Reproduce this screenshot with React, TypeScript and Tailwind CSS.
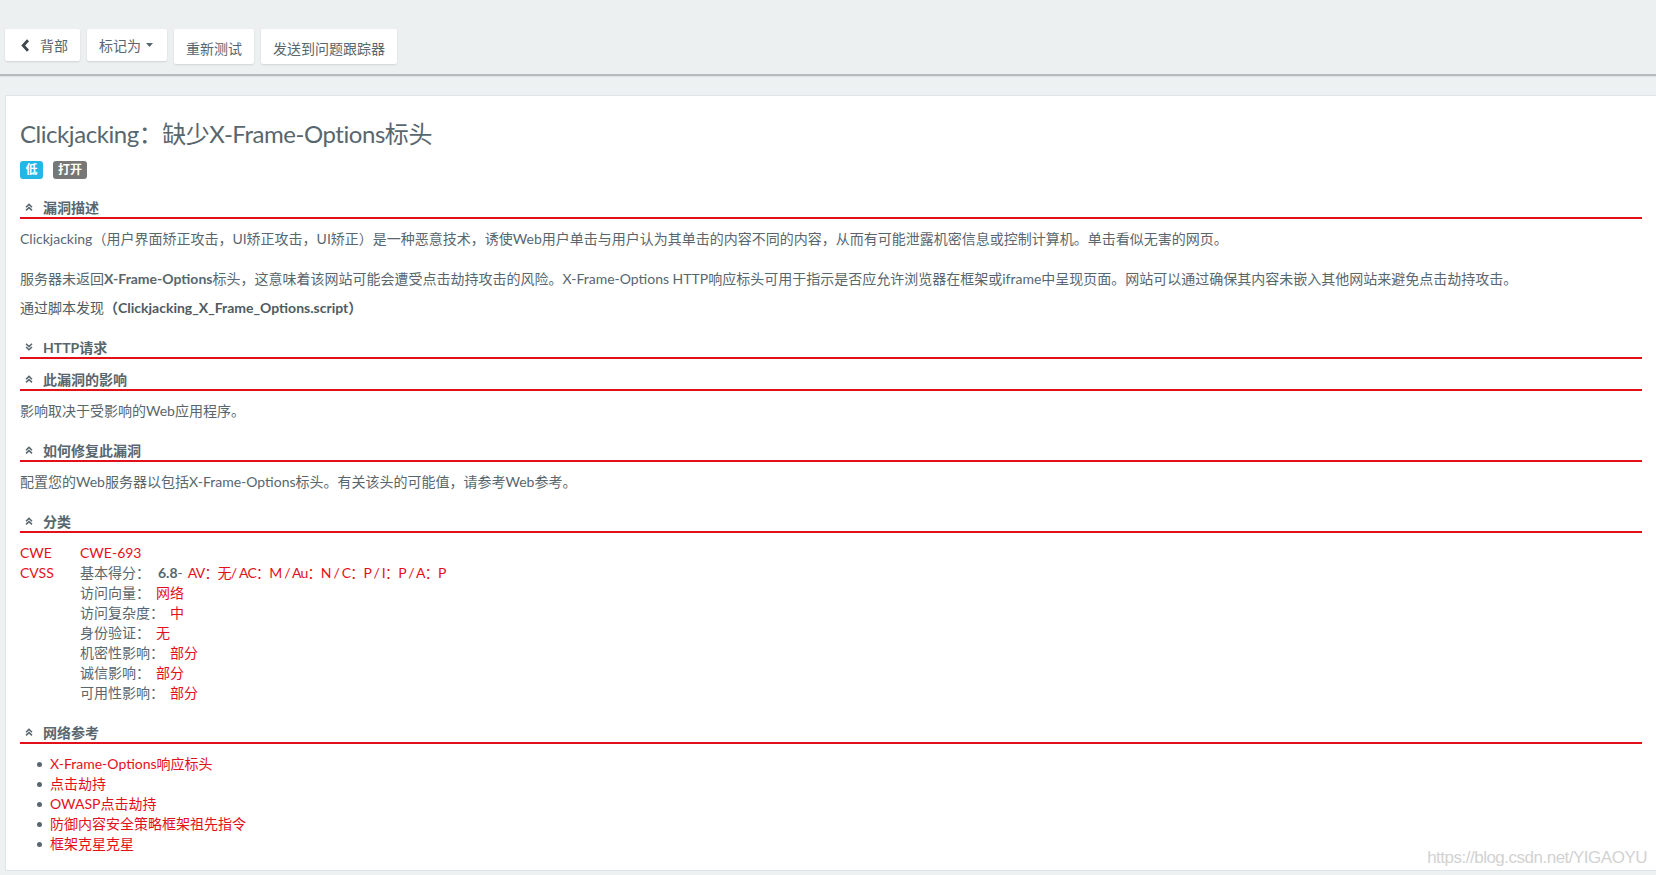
import React from "react";

const FONT = { fontFamily: 'Lato, "Noto Sans CJK SC", sans-serif' };

function ChevronsUp() {
  return (
    <svg width="8" height="8" viewBox="0 0 8 8" fill="none" stroke="#58666e" strokeWidth="1.5">
      <path d="M1 4.2 L4 1.4 L7 4.2" />
      <path d="M1 7.4 L4 4.6 L7 7.4" />
    </svg>
  );
}

function ChevronsDown() {
  return (
    <svg width="8" height="8" viewBox="0 0 8 8" fill="none" stroke="#58666e" strokeWidth="1.5">
      <path d="M1 0.8 L4 3.6 L7 0.8" />
      <path d="M1 4 L4 6.8 L7 4" />
    </svg>
  );
}

function SectionHead({ title, open = true }: { title: string; open?: boolean }) {
  return (
    <div className="mt-[11px] flex items-center gap-[10px] pl-[5px] border-b-2 border-[#e3101a] h-[21px] pb-[1px]">
      {open ? <ChevronsUp /> : <ChevronsDown />}
      <span className="text-[14px] leading-[19px] font-bold text-[#58666e]">{title}</span>
    </div>
  );
}

function Body({ children }: { children: React.ReactNode }) {
  return <div className="pt-[10px] pb-[9px] text-[14px] leading-[20px] text-[#58666e]">{children}</div>;
}

// ─── Toolbar buttons ────────────────────────────────────────────────────────
function ToolButton({ children, tall = false }: { children: React.ReactNode; tall?: boolean }) {
  return (
    <button
      className={
        tall
          ? "h-[35px] pt-[3px] px-[12px] flex items-center bg-white rounded-[2px] shadow-[0_1px_2px_rgba(0,0,0,0.12)] text-[14px] text-[#58666e]"
          : "h-[32px] px-[12px] flex items-center bg-white rounded-[2px] shadow-[0_1px_2px_rgba(0,0,0,0.12)] text-[14px] text-[#58666e]"
      }
    >
      {children}
    </button>
  );
}

const cvssRows: [string, string][] = [
  ["访问向量：", "网络"],
  ["访问复杂度：", "中"],
  ["身份验证：", "无"],
  ["机密性影响：", "部分"],
  ["诚信影响：", "部分"],
  ["可用性影响：", "部分"],
];

const refs = [
  "X-Frame-Options响应标头",
  "点击劫持",
  "OWASP点击劫持",
  "防御内容安全策略框架祖先指令",
  "框架克星克星",
];

export default function App() {
  return (
    <div className="min-h-screen bg-[#edf1f2] relative" style={FONT}>
      {/* Toolbar */}
      <div className="h-[76px] bg-[#edf0f1] border-b-2 border-[#b7babc] shadow-[0_1px_1px_rgba(0,0,0,0.06)] flex items-start gap-[7px] pl-[5px] pt-[29px]">
        <ToolButton>
          <span className="pl-[4px] pr-[10px] flex items-center">
            <svg width="9" height="13" viewBox="0 0 9 13" fill="none" stroke="#3f474d" strokeWidth="2.8">
              <path d="M7 1.3 L2.2 6.5 L7 11.7" />
            </svg>
          </span>
          背部
        </ToolButton>
        <ToolButton>
          标记为
          <svg className="ml-[5px] mr-[2px]" width="7" height="4" viewBox="0 0 7 4" fill="#58666e">
            <path d="M0 0 H7 L3.5 4 Z" />
          </svg>
        </ToolButton>
        <ToolButton tall>重新测试</ToolButton>
        <ToolButton tall>发送到问题跟踪器</ToolButton>
      </div>

      {/* Content card */}
      <div className="pt-[19px] pl-[5px]">
        <div className="bg-white border border-r-0 border-[#dee5e7] pl-[14px] pr-[14px] pt-[23px] pb-[16px]">
          <h1 className="text-[24px] leading-[30px] tracking-[-0.45px] text-[#58666e] font-normal">
            Clickjacking：缺少X-Frame-Options标头
          </h1>
          <div className="mt-[12px] flex gap-[10px]">
            <span className="h-[18px] w-[23px] text-center rounded-[3px] bg-[#23b7e5] text-white text-[12px] leading-[18px] font-bold">低</span>
            <span className="h-[18px] px-[5px] rounded-[3px] bg-[#777777] text-white text-[12px] leading-[18px] font-bold">打开</span>
          </div>

          <div className="mt-[8px] flex flex-col">
            <SectionHead title="漏洞描述" />
            <Body>
              <p>
                Clickjacking（用户界面矫正攻击，UI矫正攻击，UI矫正）是一种恶意技术，诱使Web用户单击与用户认为其单击的内容不同的内容，从而有可能泄露机密信息或控制计算机。单击看似无害的网页。
              </p>
              <p className="mt-[20px]">
                服务器未返回<b>X-Frame-Options</b>标头，这意味着该网站可能会遭受点击劫持攻击的风险。X-Frame-Options HTTP响应标头可用于指示是否应允许浏览器在框架或iframe中呈现页面。网站可以通过确保其内容未嵌入其他网站来避免点击劫持攻击。
              </p>
              <p className="mt-[9px] text-[#4f5b62]">
                通过脚本发现<b>（Clickjacking_X_Frame_Options.script）</b>
              </p>
            </Body>

            <SectionHead title="HTTP请求" open={false} />
            <SectionHead title="此漏洞的影响" />
            <Body>
              <p>影响取决于受影响的Web应用程序。</p>
            </Body>

            <SectionHead title="如何修复此漏洞" />
            <Body>
              <p>配置您的Web服务器以包括X-Frame-Options标头。有关该头的可能值，请参考Web参考。</p>
            </Body>

            <SectionHead title="分类" />
            <Body>
              <div className="flex">
                <span className="w-[60px] text-[#e3101a]">CWE</span>
                <span className="text-[#e3101a]">CWE-693</span>
              </div>
              <div className="flex">
                <span className="w-[60px] text-[#e3101a]">CVSS</span>
                <div className="flex flex-col">
                  <div className="flex">
                    <span>基本得分：</span>
                    <span className="ml-[8px] font-bold">6.8</span>
                    <span>-</span>
                    <span className="ml-[5px] text-[#e3101a] tracking-[-0.8px]">AV：无/ AC：M / Au：N / C：P / I：P / A：P</span>
                  </div>
                  {cvssRows.map(([k, v]) => (
                    <div key={k} className="flex">
                      <span>{k}</span>
                      <span className="ml-[6px] text-[#e3101a]">{v}</span>
                    </div>
                  ))}
                </div>
              </div>
            </Body>

            <SectionHead title="网络参考" />
            <div className="pt-[10px] text-[14px] leading-[20px]">
              {refs.map((r) => (
                <div key={r} className="flex items-center pl-[17px]">
                  <span className="w-[5px] h-[5px] rounded-full bg-[#58666e]" />
                  <span className="ml-[8px] text-[#e3101a]">{r}</span>
                </div>
              ))}
            </div>
          </div>
        </div>
      </div>

      {/* Watermark */}
      <div
        className="absolute right-[9px] bottom-[5px] text-[17px] tracking-[-0.5px] text-[#d2d2d2]"
        style={{ fontFamily: '"Liberation Sans", Arial, sans-serif' }}
      >
        https://blog.csdn.net/YIGAOYU
      </div>
    </div>
  );
}
